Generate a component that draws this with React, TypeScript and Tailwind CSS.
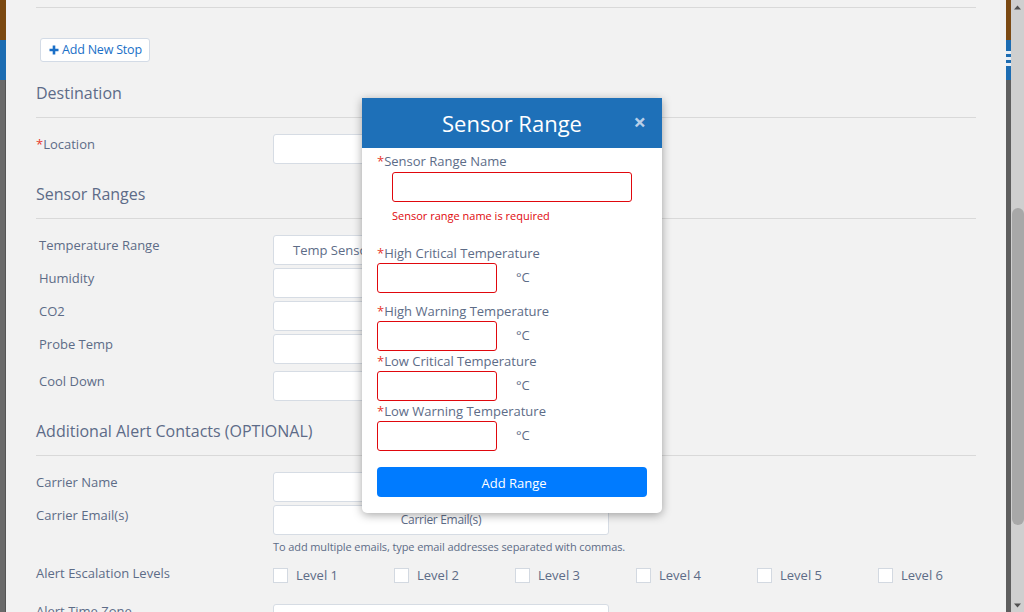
import React from "react";

const label = "text-[13px] leading-[20px] text-[#5d6c87]";
const input = "h-[30px] w-[336px] rounded-[3px] border border-[#d6dce4] bg-white";

function FormRow({ text, required, indent, mt, children }: { text: string; required?: boolean; indent?: boolean; mt: string; children?: React.ReactNode }) {
  return (
    <div className={`flex items-start ${mt}`}>
      <div className={`w-[237px] shrink-0 ${label} ${indent ? "pl-[3px]" : ""}`}>
        {required && <span className="text-[#e8372c]">*</span>}
        {text}
      </div>
      {children ?? <div className={input} />}
    </div>
  );
}

function Heading({ text, mt }: { text: string; mt: string }) {
  return (
    <div className={`${mt} border-b border-[#d9d9d9] pb-[12px]`}>
      <div className="text-[16px] leading-[24px] text-[#5d6b88]">{text}</div>
    </div>
  );
}

function ModalField({ text, mt }: { text: string; mt: string }) {
  return (
    <div className={mt}>
      <div className={label}>
        <span className="text-[#e8372c]">*</span>
        {text}
      </div>
      <div className="flex items-center">
        <div className="h-[30px] w-[120px] rounded-[3px] border border-[#e0080d] bg-white" />
        <span className="ml-[19px] text-[13px] text-[#5d6c87]">°C</span>
      </div>
    </div>
  );
}

export default function App() {
  const levels = ["Level 1", "Level 2", "Level 3", "Level 4", "Level 5", "Level 6"];
  return (
    <div className="relative flex h-[612px] w-[1024px] overflow-hidden bg-[#f2f2f2]" style={{ fontFamily: "'Open Sans', sans-serif" }}>
      {/* Left edge of app behind */}
      <div className="flex w-[6px] shrink-0 flex-col">
        <div className="h-[40px] bg-[#7b4912]" />
        <div className="h-[40px] bg-[#1c6cb2]" />
        <div className="flex-1 border-r border-[#555555] bg-[#6a6a6a]" />
      </div>

      {/* Main form */}
      <div className="flex-1 overflow-hidden pl-[30px] pr-[30px]">
        <div className="h-[8px] border-b border-[#d9d9d9]" />

        <button className="ml-[4px] mt-[30px] flex h-[24px] items-center gap-[3px] rounded-[3px] border border-[#d3dbe6] bg-white pl-[8px] pr-[7px] text-[12.5px] tracking-[-0.2px] text-[#1a6fc7]">
          <svg width="10" height="10" viewBox="0 0 10 10">
            <path d="M5 0.5v9M0.5 5h9" stroke="#1a6fc7" strokeWidth="2.6" />
          </svg>
          Add New Stop
        </button>

        <Heading text="Destination" mt="mt-[19px]" />
        <FormRow text="Location" required mt="mt-[16px]" />

        <Heading text="Sensor Ranges" mt="mt-[18px]" />
        <FormRow text="Temperature Range" indent mt="mt-[16px]">
          <div className={`${input} flex items-center pl-[19px] pt-[2px] text-[13px] text-[#5d6c87]`}>Temp Senso</div>
        </FormRow>
        <FormRow text="Humidity" indent mt="mt-[3px]" />
        <FormRow text="CO2" indent mt="mt-[3px]" />
        <FormRow text="Probe Temp" indent mt="mt-[3px]" />
        <FormRow text="Cool Down" indent mt="mt-[7px]" />

        <Heading text="Additional Alert Contacts (OPTIONAL)" mt="mt-[18px]" />
        <FormRow text="Carrier Name" mt="mt-[16px]" />
        <FormRow text="Carrier Email(s)" mt="mt-[3px]">
          <div className={`${input} flex items-center justify-center text-[12px] tracking-[-0.3px] text-[#5d6c87]`}>Carrier Email(s)</div>
        </FormRow>
        <div className="ml-[237px] mt-[4px] text-[11px] leading-[16px] tracking-[-0.1px] text-[#5d6c87]">
          To add multiple emails, type email addresses separated with commas.
        </div>
        <FormRow text="Alert Escalation Levels" mt="mt-[8px]">
          <div className="flex">
            {levels.map((l) => (
              <div key={l} className="flex w-[121px] items-center pt-[3px]">
                <div className="h-[15px] w-[15px] border border-[#d3d9e1] bg-white" />
                <span className="ml-[8px] text-[13px] text-[#5d6c87]">{l}</span>
              </div>
            ))}
          </div>
        </FormRow>
        <div className="mt-[18px] flex items-start">
          <div className={`w-[237px] shrink-0 ${label} -mt-[3px]`}>Alert Time Zone</div>
          <div className={input} />
        </div>
      </div>

      {/* Right edge of app behind */}
      <div className="flex w-[5px] shrink-0 flex-col">
        <div className="h-[40px] bg-[#7b4912]" />
        <div className="flex h-[40px] flex-col bg-[#1c6cb2] pt-[11px]">
          <div className="h-[3px] bg-[#e6eef6]" />
          <div className="mt-[3px] h-[3px] bg-[#e6eef6]" />
          <div className="mt-[3px] h-[3px] bg-[#e6eef6]" />
        </div>
        <div className="flex-1 bg-[#5e5e5e]" />
      </div>

      {/* Scrollbar */}
      <div className="flex w-[13px] shrink-0 flex-col items-center bg-[#cfcfcf]">
        <div className="flex h-[14px] items-center justify-center">
          <svg width="7" height="5" viewBox="0 0 7 5"><path d="M3.5 0.5L7 4.5H0z" fill="#505050" /></svg>
        </div>
        <div className="mt-[194px] h-[317px] w-[12px] rounded-[6px] bg-[#a8a8a8]" />
        <div className="flex-1" />
        <div className="flex h-[14px] items-center justify-center">
          <svg width="7" height="5" viewBox="0 0 7 5"><path d="M0 0.5H7L3.5 4.5z" fill="#505050" /></svg>
        </div>
      </div>

      {/* Modal */}
      <div className="absolute left-[362px] top-[98px] w-[300px] rounded-b-[5px] bg-white shadow-[0_2px_10px_rgba(0,0,0,0.35)]">
        <div className="relative flex h-[50px] items-center justify-center bg-[#1e70b8]">
          <span className="text-[22px] text-white">Sensor Range</span>
          <span className="absolute right-[16px] top-[11px] text-[22px] font-bold leading-[24px] text-[#b9cfe8]">×</span>
        </div>
        <div className="px-[15px] pb-[16px] pt-[3px]">
          <div className={label}>
            <span className="text-[#e8372c]">*</span>Sensor Range Name
          </div>
          <div className="ml-[15px] mt-[1px] h-[30px] w-[240px] rounded-[3px] border border-[#e0080d] bg-white" />
          <div className="ml-[15px] mt-[6px] text-[11px] leading-[16px] text-[#e0080d]">Sensor range name is required</div>

          <ModalField text="High Critical Temperature" mt="mt-[19px]" />
          <ModalField text="High Warning Temperature" mt="mt-[8px]" />
          <ModalField text="Low Critical Temperature" mt="mt-0" />
          <ModalField text="Low Warning Temperature" mt="mt-0" />

          <button className="mt-[16px] flex h-[30px] w-[270px] items-center justify-center rounded-[4px] bg-[#007bff] pl-[4px] pt-[3px] text-[13px] text-white">Add Range</button>
        </div>
      </div>
    </div>
  );
}
